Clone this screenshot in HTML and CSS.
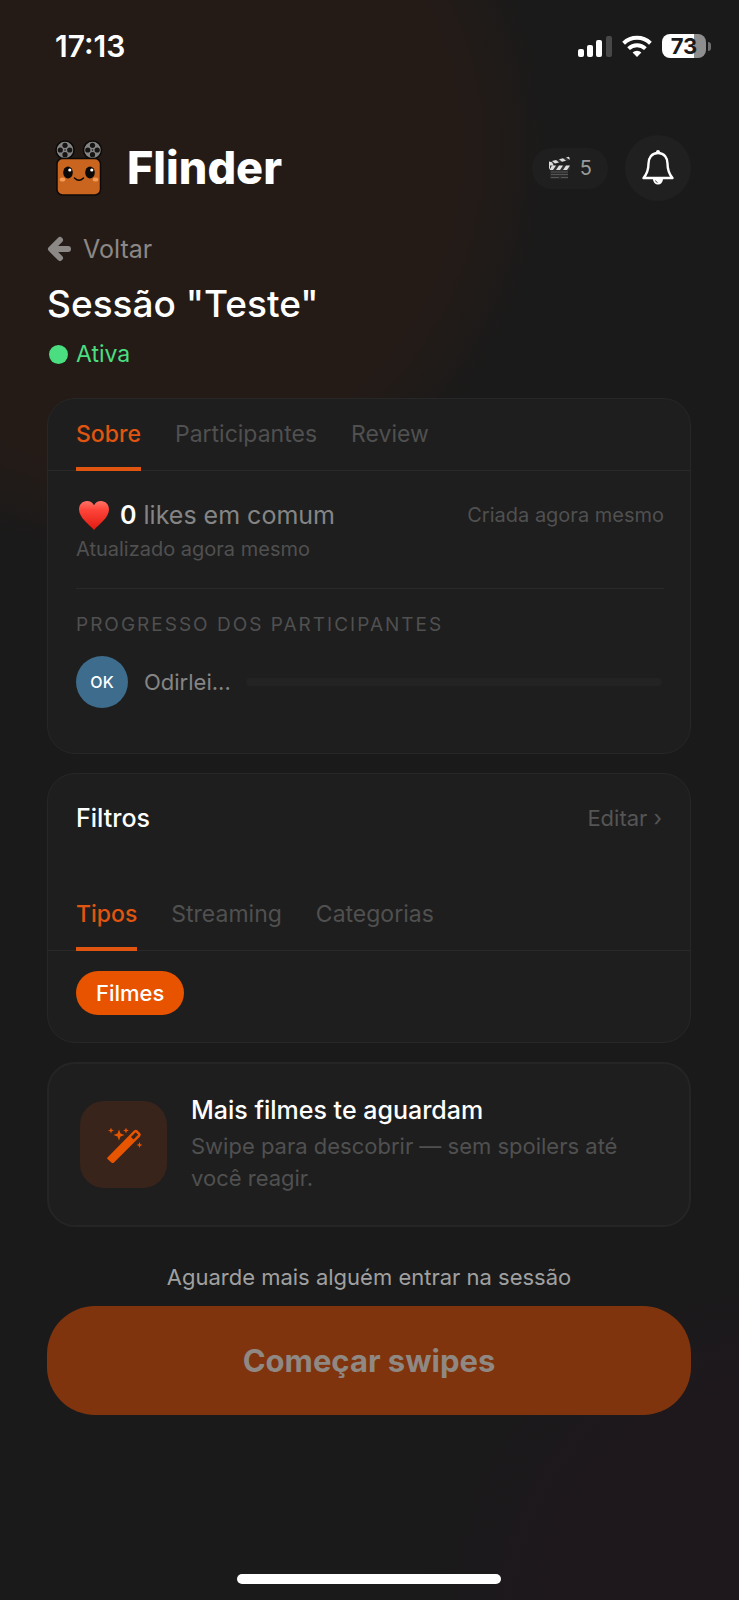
FILE: index.html
```html
<!DOCTYPE html>
<html lang="pt-BR">

<head>
  <meta charset="UTF-8">
  <meta name="viewport" content="width=device-width, initial-scale=1.0">
  <title>Flinder</title>
  <link rel="stylesheet" href="styles.css">
</head>

<body>
  <div class="page">
    <div class="status">
      <span class="time">17:13</span>
      <div class="status-icons">
        <svg class="signal" viewBox="0 0 34 22" width="34" height="22">
          <rect x="0" y="14" width="6" height="8" rx="2" fill="#fff" />
          <rect x="9" y="10" width="6" height="12" rx="2" fill="#fff" />
          <rect x="18" y="5" width="6" height="17" rx="2" fill="#fff" />
          <rect x="28" y="1" width="6" height="21" rx="2" fill="#484848" />
        </svg>
        <svg class="wifi" viewBox="0 0 30 22" width="30" height="22">
          <g fill="none" stroke="#fff" stroke-width="4">
            <path d="M1.6 8.2a19.5 19.5 0 0 1 26.8 0" />
            <path d="M6.6 13.6a12.4 12.4 0 0 1 16.8 0" />
          </g>
          <path d="M15 22l-4.4-4.4a6.4 6.4 0 0 1 8.8 0z" fill="#fff" />
        </svg>
        <div class="battery">
          <span class="battery-level">73</span>
          <span class="battery-tip"></span>
        </div>
      </div>
    </div>

    <header class="header">
      <div class="brand">
        <svg class="logo" viewBox="0 0 48 58" width="48" height="58">
          <g stroke="#0c0a09" stroke-width="1.5">
            <circle cx="10" cy="11" r="9" fill="#858585" />
            <circle cx="37.500" cy="11" r="9" fill="#858585" />
            <rect x="2" y="19.500" width="43.500" height="36.500" rx="5.500" fill="#c9651f" />
          </g>
          <g fill="#161413">
            <circle cx="10" cy="6.300" r="2.600" />
            <circle cx="10" cy="15.700" r="2.600" />
            <circle cx="5.300" cy="11" r="2.600" />
            <circle cx="14.700" cy="11" r="2.600" />
            <circle cx="10" cy="11" r="0.800" />
            <circle cx="37.500" cy="6.300" r="2.600" />
            <circle cx="37.500" cy="15.700" r="2.600" />
            <circle cx="32.800" cy="11" r="2.600" />
            <circle cx="42.200" cy="11" r="2.600" />
            <circle cx="37.500" cy="11" r="0.800" />
          </g>
          <ellipse cx="13" cy="33.500" rx="4.800" ry="6" fill="#0b0908" />
          <ellipse cx="35" cy="33.500" rx="4.800" ry="6" fill="#0b0908" />
          <circle cx="14.800" cy="31" r="1.600" fill="#fff" />
          <circle cx="36.800" cy="31" r="1.600" fill="#fff" />
          <ellipse cx="7.500" cy="40.500" rx="2.800" ry="2" fill="#f59a54" />
          <ellipse cx="40.500" cy="40.500" rx="2.800" ry="2" fill="#f59a54" />
          <path d="M19.500 39q4.500 4.500 9 0" fill="none" stroke="#0b0908" stroke-width="1.500" stroke-linecap="round" />
        </svg>
        <span class="brand-name">Flinder</span>
      </div>
      <div class="header-actions">
        <div class="credits">
          <svg viewBox="0 0 24 24" width="24" height="24">
            <path d="M1 6L21 1l1 3L2 9z" fill="#333" />
            <path d="M4 5l4-1 3 2.500-4 1zM11 3.300l4-1 3 2.500-4 1zM18 1.500l3-.7 1 3z" fill="#ddd" />
            <path d="M1 5.500l3 .8L6 10l-5 3z" fill="#ddd" />
            <rect x="2" y="9.500" width="20" height="4.500" fill="#333" />
            <path d="M4 9.500h4L5 14H1.500zM11 9.500h4L12 14H8zM18 9.500h4L19 14h-4z" fill="#ddd" />
            <rect x="2" y="14" width="18" height="9" fill="#2b2b2b" />
            <path d="M3 16h17M3 18.500h17M3 21.500h8M13 21.500h7" stroke="#555" stroke-width="1" />
          </svg>
          <span>5</span>
        </div>
        <button class="bell" type="button" aria-label="Notificações">
          <svg viewBox="0 0 34 38" width="34" height="38">
            <path d="M17 4c-6.500 0-9.500 5-9.500 10.500 0 7-1.500 10.500-5 14.500h29c-3.500-4-5-7.500-5-14.500C26.500 9 23.500 4 17 4z" fill="none" stroke="#fff" stroke-width="2.400" stroke-linejoin="round" />
            <circle cx="17" cy="3" r="2" fill="#fff" />
            <path d="M12 30a5 5.500 0 0 0 10 0z" fill="#fff" />
            <path d="M14.500 31.500q.5 1.700 2 2" fill="none" stroke="#222" stroke-width="0.900" />
          </svg>
        </button>
      </div>
    </header>

    <main class="main">
      <a class="back" href="#">
        <svg viewBox="0 0 24 26" width="24" height="26">
          <path d="M13 4L4 13l9 9M5 13h16" fill="none" stroke="#8c8886" stroke-width="6" stroke-linecap="round" stroke-linejoin="round" />
        </svg>
        <span>Voltar</span>
      </a>
      <h1 class="title">Sessão "Teste"</h1>
      <p class="state"><span class="dot"></span>Ativa</p>

      <section class="card">
        <div class="tabs" role="tablist">
          <button class="tab active" type="button" role="tab" aria-selected="true">Sobre</button>
          <button class="tab" type="button" role="tab" aria-selected="false">Participantes</button>
          <button class="tab" type="button" role="tab" aria-selected="false">Review</button>
        </div>
        <div class="about">
          <div class="about-row">
            <div class="likes">
              <svg viewBox="0 0 32 30" width="32" height="30">
                <defs>
                  <linearGradient id="heart" x1="0" y1="0" x2="0" y2="1">
                    <stop offset="0" stop-color="#ff7468" />
                    <stop offset="0.300" stop-color="#ff453a" />
                    <stop offset="1" stop-color="#e01a10" />
                  </linearGradient>
                </defs>
                <path d="M16 30C12 25 1 18 1 9.500 1 4.500 4.500 1 9 1c3 0 5.700 1.500 7 4.200C17.300 2.500 20 1 23 1c4.500 0 8 3.500 8 8.500C31 18 20 25 16 30z" fill="url(#heart)" />
              </svg>
              <p><strong>0</strong> likes em comum</p>
            </div>
            <span class="small">Criada agora mesmo</span>
          </div>
          <p class="small">Atualizado agora mesmo</p>
        </div>
        <div class="progress">
          <h2 class="label">Progresso dos participantes</h2>
          <div class="member">
            <span class="avatar">OK</span>
            <span class="member-name">Odirlei...</span>
            <span class="bar"></span>
          </div>
        </div>
      </section>

      <section class="card">
        <div class="card-head">
          <h2 class="card-title">Filtros</h2>
          <a class="edit" href="#">Editar ›</a>
        </div>
        <div class="tabs" role="tablist">
          <button class="tab active" type="button" role="tab" aria-selected="true">Tipos</button>
          <button class="tab" type="button" role="tab" aria-selected="false">Streaming</button>
          <button class="tab" type="button" role="tab" aria-selected="false">Categorias</button>
        </div>
        <div class="chips">
          <span class="chip">Filmes</span>
        </div>
      </section>

      <section class="card promo">
        <div class="promo-icon">
          <svg viewBox="0 0 36 36" width="36" height="36">
            <path d="M1.500 31.500L28 4.500a2.500 2.500 0 0 1 3.500 0l2.500 2.500a2.500 2.500 0 0 1 0 3.500L8 36.500a2 2 0 0 1-2.600 0l-3.900-3.400a1.200 1.200 0 0 1 0-1.600z" fill="#e85500" />
            <path d="M25 11l4.700-4.700 2.500 2.500L27.500 13.500z" fill="#38241b" />
            <path d="M13 3.500l1.500 4 4 1.500-4 1.500-1.500 4-1.500-4-4-1.500 4-1.500zM5 1.500l.8 2.200 2.200.8-2.200.8L5 7.500l-.8-2.200L2 4.500l2.200-.8zM20 1.500l.8 2.200 2.200.8-2.200.8-.8 2.200-.8-2.200-2.200-.8 2.200-.8zM33.500 16l.8 2.200 2.200.8-2.200.8-.8 2.200-.8-2.200-2.200-.8 2.200-.8z" fill="#e85500" />
          </svg>
        </div>
        <div class="promo-text">
          <h2 class="card-title">Mais filmes te aguardam</h2>
          <p class="promo-desc">Swipe para descobrir — sem spoilers até você reagir.</p>
        </div>
      </section>

      <p class="hint" id="hint">Aguarde mais alguém entrar na sessão</p>
      <button class="start" type="button" disabled aria-describedby="hint">Começar swipes</button>
    </main>

    <div class="home-bar"></div>
  </div>
</body>

</html>
```

FILE: styles.css
```css
* {
  box-sizing: border-box;
}

body {
  margin: 0;
  color: #fff;
  font-family: Inter, "Liberation Sans", sans-serif;
  background:
    radial-gradient(circle at 140px 150px, #241b17 320px, rgba(36, 27, 23, 0) 410px),
    radial-gradient(circle at calc(100% + 40px) calc(100% + 20px), #1e181d 230px, rgba(30, 24, 29, 0) 360px),
    #1a1a1a;
}

h1,
h2,
p {
  margin: 0;
}

button {
  font-family: inherit;
  border: none;
}

a {
  text-decoration: none;
}

svg {
  display: block;
  flex-shrink: 0;
  overflow: visible;
}

.page {
  min-height: 100vh;
  padding: 28px 48px 16px 47px;
  display: flex;
  flex-direction: column;
}

/* status bar */
.status {
  display: flex;
  align-items: center;
  justify-content: space-between;
  height: 36px;
  padding-left: 8px;
}

.time {
  font-size: 30px;
  font-weight: 600;
}

.status-icons {
  display: flex;
  align-items: center;
  gap: 10px;
  margin-right: -20px;
}

.battery {
  display: flex;
  align-items: center;
  gap: 2px;
}

.battery-level {
  width: 44px;
  height: 24px;
  border-radius: 8px;
  background: linear-gradient(90deg, #fff 73%, #8e8e8e 73%);
  color: #1a1a1a;
  font-size: 22px;
  font-weight: 700;
  line-height: 24px;
  text-align: center;
}

.battery-tip {
  width: 3px;
  height: 9px;
  border-radius: 0 4px 4px 0;
  background: #6e6e6e;
}

/* header */
.header {
  display: flex;
  align-items: center;
  justify-content: space-between;
  margin-top: 71px;
}

.brand {
  display: flex;
  align-items: center;
  gap: 24px;
  padding-left: 8px;
}

.brand-name {
  font-size: 45px;
  font-weight: 800;
  line-height: 56px;
}

.header-actions {
  display: flex;
  align-items: center;
  gap: 17px;
}

.credits {
  display: flex;
  align-items: center;
  gap: 8px;
  height: 41px;
  padding: 0 16px;
  border-radius: 20px;
  background: #1f1f1f;
  color: #9a9a9a;
  font-size: 20px;
}

.bell {
  display: flex;
  align-items: center;
  justify-content: center;
  width: 66px;
  height: 66px;
  padding: 0;
  border-radius: 50%;
  background: #202020;
}

/* session */
.main {
  display: flex;
  flex-direction: column;
}

.back {
  display: flex;
  align-items: center;
  align-self: flex-start;
  gap: 12px;
  margin-top: 32px;
  color: #8c8886;
  font-size: 25px;
  line-height: 32px;
}

.title {
  margin-top: 15px;
  font-size: 37px;
  font-weight: 500;
  line-height: 48px;
}

.state {
  display: flex;
  align-items: center;
  gap: 8px;
  margin-top: 10px;
  padding-left: 2px;
  color: #4ade80;
  font-size: 23px;
  line-height: 32px;
}

.dot {
  width: 19px;
  height: 19px;
  border-radius: 50%;
  background: #4ade80;
}

.card {
  margin-top: 19px;
  border: 1px solid #272727;
  border-radius: 28px;
  background: #1e1e1e;
}

.state + .card {
  margin-top: 28px;
}

.tabs {
  display: flex;
  gap: 34px;
  padding: 0 28px;
  border-bottom: 1px solid #292929;
}

.tab {
  margin-bottom: -1px;
  padding: 19px 0 17px;
  border-bottom: 4px solid transparent;
  background: none;
  color: #505050;
  font-size: 23px;
  line-height: 32px;
}

.tab.active {
  border-color: #e05510;
  color: #e05510;
  font-weight: 500;
}

.about {
  margin: 0 26px 0 28px;
  padding: 28px 0 23px;
  border-bottom: 1px solid #292929;
}

.about-row {
  display: flex;
  align-items: center;
  justify-content: space-between;
}

.likes {
  display: flex;
  align-items: center;
  gap: 10px;
  padding-left: 2px;
  color: #858585;
  font-size: 25px;
  line-height: 32px;
}

.likes strong {
  color: #fff;
  font-weight: 600;
}

.small {
  color: #505050;
  font-size: 20px;
  line-height: 32px;
}

.about > .small {
  margin-top: 2px;
}

.progress {
  padding: 20px 28px 45px;
}

.label {
  color: #505050;
  font-size: 19px;
  font-weight: 400;
  letter-spacing: 2px;
  line-height: 32px;
  text-transform: uppercase;
}

.member {
  display: flex;
  align-items: center;
  margin-top: 15px;
}

.avatar {
  width: 52px;
  height: 52px;
  border-radius: 50%;
  background: #3d6c8d;
  font-size: 16px;
  font-weight: 500;
  line-height: 52px;
  text-align: center;
}

.member-name {
  width: 102px;
  margin-left: 16px;
  color: #858585;
  font-size: 22px;
}

.bar {
  flex: 1;
  height: 8px;
  border-radius: 4px;
  background: #232323;
}

.card-head {
  display: flex;
  align-items: center;
  justify-content: space-between;
  padding: 28px 28px 45px;
}

.card-title {
  font-size: 25px;
  font-weight: 500;
  line-height: 32px;
}

.edit {
  color: #555;
  font-size: 22px;
}

.chips {
  display: flex;
  padding: 20px 28px 27px;
}

.chip {
  padding: 0 20px;
  border-radius: 22px;
  background: #e85300;
  font-size: 22px;
  font-weight: 500;
  line-height: 44px;
}

.promo {
  display: flex;
  align-items: center;
  gap: 24px;
  padding: 30px 31px 31px;
  border-width: 2px;
  border-color: #252525;
}

.promo-icon {
  display: flex;
  align-items: center;
  justify-content: center;
  flex-shrink: 0;
  width: 87px;
  height: 87px;
  border-radius: 24px;
  background: #38241b;
}

.promo-desc {
  margin-top: 4px;
  color: #505050;
  font-size: 22px;
  line-height: 32px;
}

.hint {
  margin-top: 34px;
  color: #a0a0a0;
  font-size: 22px;
  line-height: 32px;
  text-align: center;
}

.start {
  height: 109px;
  margin-top: 13px;
  border-radius: 48px;
  background: #80340e;
  color: #8f8883;
  font-size: 31px;
  font-weight: 700;
}

.home-bar {
  width: 41%;
  height: 10px;
  margin: auto auto 0;
  border-radius: 5px;
  background: #fff;
}
```
